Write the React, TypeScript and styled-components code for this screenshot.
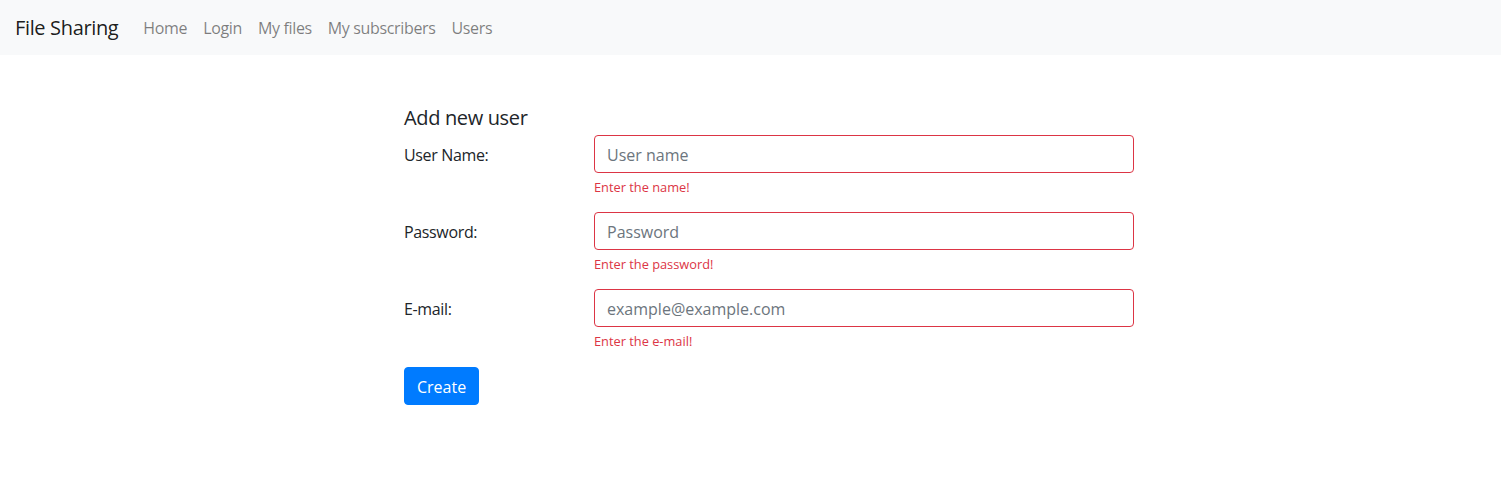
import { createGlobalStyle } from "styled-components";
import styled from "styled-components";

const GlobalStyle = createGlobalStyle`
  * {
    box-sizing: border-box;
  }

  body {
    margin: 0;
    font-family: "Open Sans", "Liberation Sans", sans-serif;
    font-size: 16px;
    line-height: 1.5;
    letter-spacing: -0.35px;
    color: #212529;
    background: #fff;
  }
`;

const Nav = styled.nav`
  display: flex;
  align-items: center;
  height: 55px;
  padding: 1px 16px 0 15px;
  background-color: #f8f9fa;
`;

const Brand = styled.a`
  font-size: 20px;
  line-height: 30px;
  margin-right: 17px;
  color: rgba(0, 0, 0, 0.9);
  text-decoration: none;
`;

const NavList = styled.div`
  display: flex;
  align-items: center;
`;

const NavItem = styled.a`
  padding: 8px;
  color: rgba(0, 0, 0, 0.5);
  text-decoration: none;
`;

const Main = styled.main`
  padding: 51px 0 0 404px;
`;

const Form = styled.form`
  width: 730px;
`;

const Title = styled.h5`
  margin: 0 0 5px;
  font-size: 20px;
  font-weight: 400;
  line-height: 1.2;
`;

const Row = styled.div`
  display: grid;
  grid-template-columns: 190px 540px;
  margin-bottom: 16px;
`;

const Label = styled.label`
  padding-top: 8px;
  padding-bottom: 6px;
  line-height: 1.5;
`;

const Field = styled.div`
  display: flex;
  flex-direction: column;
`;

interface InputProps {
  invalid: boolean;
}

const Input = styled.input<InputProps>`
  height: 38px;
  padding: 7px 12px 5px;
  font: inherit;
  color: #495057;
  border: 1px solid ${({ invalid }) => (invalid ? "#dc3545" : "#ced4da")};
  border-radius: 4px;
  outline: none;

  &::placeholder {
    color: #6c757d;
  }
`;

const Feedback = styled.div`
  margin-top: 5px;
  margin-bottom: -1px;
  font-size: 12.8px;
  letter-spacing: 0;
  color: #dc3545;
`;

const Button = styled.button`
  padding: 7px 12px 5px;
  font: inherit;
  line-height: 1.5;
  color: #fff;
  background-color: #007bff;
  border: 1px solid #007bff;
  border-radius: 4px;
  cursor: pointer;
`;

const fields = [
  { label: "User Name:", placeholder: "User name", type: "text", error: "Enter the name!" },
  { label: "Password:", placeholder: "Password", type: "password", error: "Enter the password!" },
  { label: "E-mail:", placeholder: "example@example.com", type: "email", error: "Enter the e-mail!" },
];

export default function App() {
  return (
    <>
      <GlobalStyle />
      <Nav>
        <Brand href="#">File Sharing</Brand>
        <NavList>
          <NavItem href="#">Home</NavItem>
          <NavItem href="#">Login</NavItem>
          <NavItem href="#">My files</NavItem>
          <NavItem href="#">My subscribers</NavItem>
          <NavItem href="#">Users</NavItem>
        </NavList>
      </Nav>
      <Main>
        <Form onSubmit={(e) => e.preventDefault()}>
          <Title>Add new user</Title>
          {fields.map((f) => (
            <Row key={f.label}>
              <Label>{f.label}</Label>
              <Field>
                <Input invalid type={f.type} placeholder={f.placeholder} />
                <Feedback>{f.error}</Feedback>
              </Field>
            </Row>
          ))}
          <Button type="submit">Create</Button>
        </Form>
      </Main>
    </>
  );
}
